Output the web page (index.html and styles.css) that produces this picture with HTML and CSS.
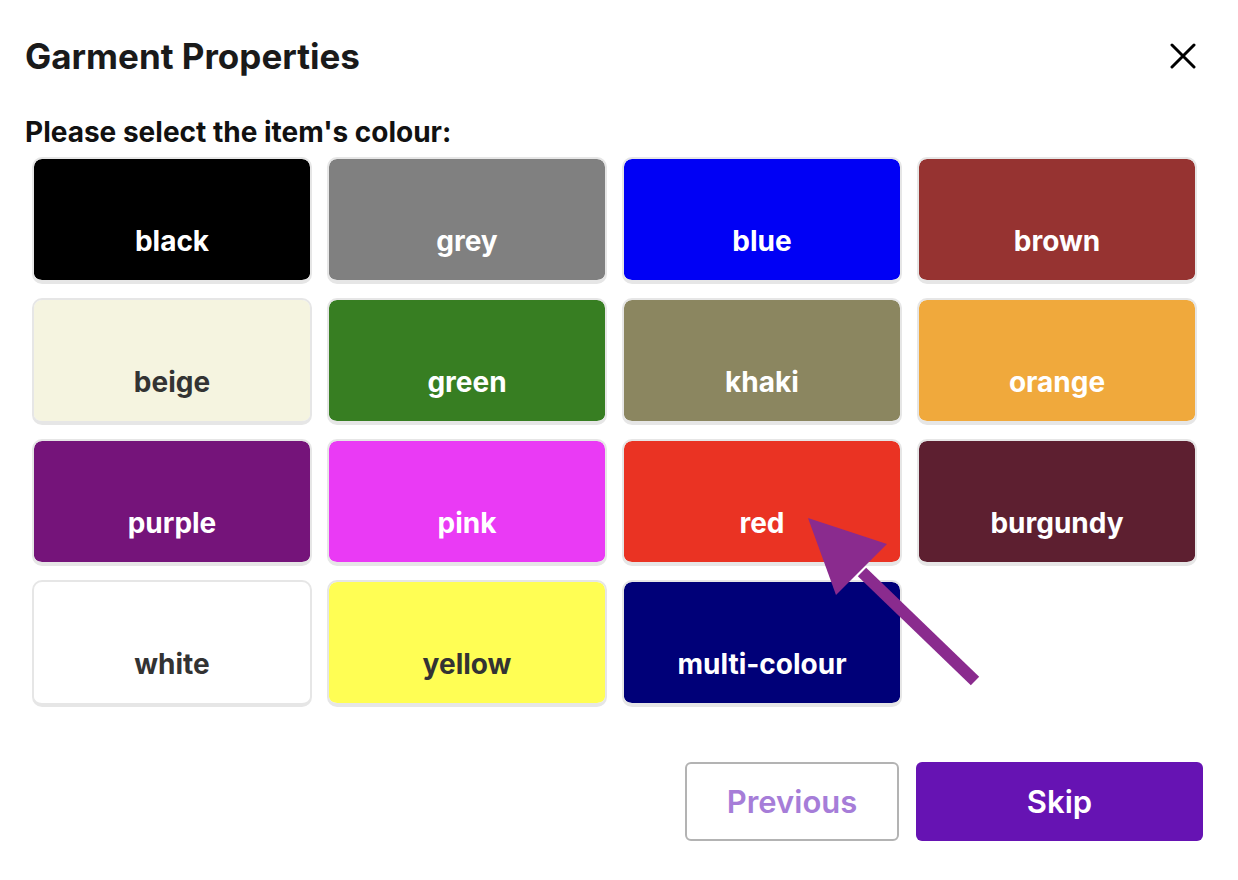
FILE: index.html
```html
<!DOCTYPE html>
<html lang="en">
<head>
    <meta charset="UTF-8">
    <meta name="viewport" content="width=device-width, initial-scale=1.0">
    <title>Garment Properties</title>
    <link rel="stylesheet" href="styles.css">
</head>
<body>
    <div class="modal">
        <div class="modal-header">
            <h1>Garment Properties</h1>
            <button class="close-btn" aria-label="Close">
                <svg width="26" height="26" viewBox="0 0 26 26">
                    <path d="M2 2 L24 24 M24 2 L2 24" stroke="#000" stroke-width="3" stroke-linecap="round"/>
                </svg>
            </button>
        </div>

        <p class="question">Please select the item's colour:</p>

        <div class="colour-grid">
            <button class="swatch black">black</button>
            <button class="swatch grey">grey</button>
            <button class="swatch blue">blue</button>
            <button class="swatch brown">brown</button>
            <button class="swatch beige light">beige</button>
            <button class="swatch green">green</button>
            <button class="swatch khaki">khaki</button>
            <button class="swatch orange">orange</button>
            <button class="swatch purple">purple</button>
            <button class="swatch pink">pink</button>
            <button class="swatch red">red</button>
            <button class="swatch burgundy">burgundy</button>
            <button class="swatch white light">white</button>
            <button class="swatch yellow light">yellow</button>
            <button class="swatch navy">multi-colour</button>
        </div>

        <div class="actions">
            <button class="btn btn-secondary">Previous</button>
            <button class="btn btn-primary">Skip</button>
        </div>

        <!-- annotation arrow pointing at the red swatch -->
        <svg class="pointer" width="200" height="190" viewBox="0 0 200 190">
            <line x1="59" y1="59" x2="172" y2="168" stroke="#8a2b8e" stroke-width="12"/>
            <polygon points="5,5 84,31 33,82" fill="#8a2b8e"/>
        </svg>
    </div>
</body>
</html>
```

FILE: styles.css
```css
:root {
    --text: #1a1a1a;
    --tile-border: #e6e6e6;
    --primary: #6613b3;
    --primary-light: #a67dd8;
    --muted-border: #b3b3b3;
}

body {
    font-family: 'Inter', 'Noto Sans', sans-serif;
    background: #ffffff;
    margin: 0;
}

.modal {
    position: relative;
    padding: 35px 35px 0 25px;
}

.modal-header {
    display: flex;
    justify-content: space-between;
    align-items: center;
}

h1 {
    margin: 0;
    font-size: 35px;
    line-height: 42px;
    font-weight: 700;
    color: var(--text);
}

.close-btn {
    background: none;
    border: none;
    padding: 0;
    margin-right: 7px;
    width: 26px;
    height: 26px;
    cursor: pointer;
}

.question {
    margin: 38px 0 0;
    font-size: 28px;
    line-height: 34px;
    font-weight: 700;
    color: #111111;
}

.colour-grid {
    display: grid;
    grid-template-columns: repeat(4, 280px);
    column-gap: 15px;
    row-gap: 14px;
    margin: 8px 0 0 7px;
}

.swatch {
    height: 127px;
    border: 2px solid var(--tile-border);
    border-bottom-width: 4px;
    border-radius: 10px;
    background-clip: padding-box;
    display: flex;
    align-items: flex-end;
    justify-content: center;
    padding: 0 0 22px;
    box-sizing: border-box;
    font-family: inherit;
    font-size: 28px;
    line-height: 34px;
    font-weight: 700;
    color: #ffffff;
    cursor: pointer;
}

.swatch.light {
    color: #333333;
}

.black { background-color: #000000; }
.grey { background-color: #808080; }
.blue { background-color: #0000f5; }
.brown { background-color: #963331; }
.beige { background-color: #f5f4e0; }
.green { background-color: #377e22; }
.khaki { background-color: #8b8660; }
.orange { background-color: #f0a93c; }
.purple { background-color: #75147a; }
.pink { background-color: #ea3af5; }
.red { background-color: #ea3323; }
.burgundy { background-color: #5d1f30; }
.white { background-color: #ffffff; }
.yellow { background-color: #fffe54; }
.navy { background-color: #000078; }

.actions {
    display: flex;
    justify-content: flex-end;
    gap: 17px;
    margin-top: 55px;
}

.btn {
    height: 79px;
    font-family: inherit;
    font-size: 31px;
    font-weight: 600;
    border-radius: 6px;
    cursor: pointer;
}

.btn-secondary {
    width: 214px;
    background: #ffffff;
    border: 2px solid var(--muted-border);
    color: var(--primary-light);
}

.btn-primary {
    width: 287px;
    background: var(--primary);
    border: none;
    color: #ffffff;
}

.pointer {
    position: absolute;
    left: 803px;
    top: 513px;
}
```
